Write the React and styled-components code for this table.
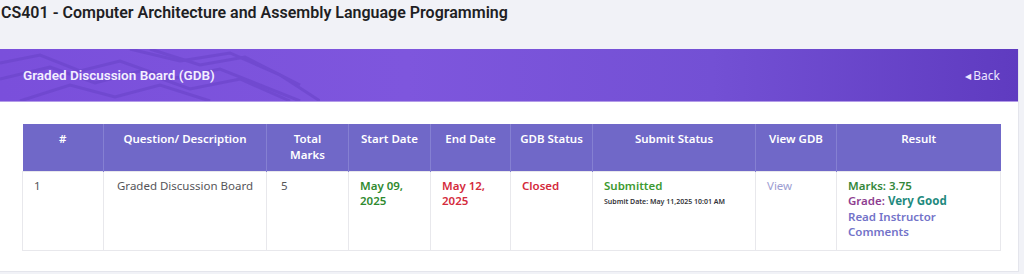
import React from 'react';
import styled, {createGlobalStyle} from 'styled-components';

const GlobalStyle = createGlobalStyle`
  body {
    margin: 0;
    background: #f1f2f7;
    font-family: "Noto Sans", "Open Sans", sans-serif;
  }
`;

const columns = [
    {title: '#', width: 81},
    {title: 'Question/ Description', width: 163},
    {title: 'Total Marks', width: 82, narrow: true},
    {title: 'Start Date', width: 82},
    {title: 'End Date', width: 80},
    {title: 'GDB Status', width: 82},
    {title: 'Submit Status', width: 163},
    {title: 'View GDB', width: 81},
    {title: 'Result', width: 164},
];

const Wave = () => (
    <WaveSvg viewBox="0 0 320 52" preserveAspectRatio="none">
        <path d="M0 14 L40 6 L80 22 L120 12 L170 30 L220 20 L300 52" />
        <path d="M0 30 L50 18 L95 34 L140 22 L190 40 L240 30 L290 52" />
        <path d="M20 52 L70 36 L115 48 L160 36 L210 52" />
        <path d="M130 0 L180 12 L230 4 L280 26 L320 52" />
        <path d="M150 0 L200 16 L245 8 L300 36" />
    </WaveSvg>
);

const App = () => {
    return (
        <Page>
            <GlobalStyle/>
            <Title>CS401 - Computer Architecture and Assembly Language Programming</Title>
            <Card>
                <Banner>
                    <Wave/>
                    <BannerTitle>Graded Discussion Board (GDB)</BannerTitle>
                    <BackLink><Caret>&#9664;</Caret>Back</BackLink>
                </Banner>
                <Body>
                    <Table>
                        <colgroup>
                            {columns.map(c => <col key={c.title} style={{width: c.width}}/>)}
                        </colgroup>
                        <thead>
                        <tr>
                            {columns.map(c => (
                                <Th key={c.title}>
                                    {c.narrow ? <NarrowLabel>{c.title}</NarrowLabel> : c.title}
                                </Th>
                            ))}
                        </tr>
                        </thead>
                        <tbody>
                        <tr>
                            <Td>1</Td>
                            <Td $pad={13}>Graded Discussion Board</Td>
                            <Td $pad={14}>5</Td>
                            <Td><Colored $color="#2f8a2f" $bold>May 09,<br/>2025</Colored></Td>
                            <Td><Colored $color="#d42a3c" $bold>May 12,<br/>2025</Colored></Td>
                            <Td><Colored $color="#d42a3c" $bold>Closed</Colored></Td>
                            <Td>
                                <Colored $color="#3d9a30" $bold>Submitted</Colored>
                                <SubmitDate>Submit Date: May 11,2025 10:01 AM</SubmitDate>
                            </Td>
                            <Td><Colored $color="#9d9dd2">View</Colored></Td>
                            <Td>
                                <ResultLine $color="#34873a">Marks: 3.75</ResultLine>
                                <ResultLine $color="#8e3d90">Grade: <Grade>Very Good</Grade></ResultLine>
                                <ResultLine $color="#7373c9">Read Instructor<br/>Comments</ResultLine>
                            </Td>
                        </tr>
                        </tbody>
                    </Table>
                </Body>
            </Card>
        </Page>
    );
};

const Page = styled.div`
  width: 1024px;
  height: 274px;
  overflow: hidden;
`;

const Title = styled.h1`
  margin: 0;
  padding: 3px 0 0 1px;
  height: 46px;
  box-sizing: border-box;
  font-family: Roboto, "Liberation Sans", sans-serif;
  font-size: 16px;
  font-weight: 600;
  color: #1f1f24;
`;

const Card = styled.div`
  width: 1019px;
  margin-top: 3px;
  background: #ffffff;
  border-right: 1px solid #e4e5ec;
  border-bottom: 1px solid #e4e5ec;
  box-sizing: border-box;
`;

const Banner = styled.div`
  position: relative;
  height: 52px;
  display: flex;
  align-items: center;
  justify-content: space-between;
  padding: 0 18px 0 23px;
  background: linear-gradient(90deg, #7a4fdb 0%, #7e56dd 40%, #7350d4 70%, #5f3bc0 100%);
  border-bottom: 1px solid #b39be8;
  overflow: hidden;
`;

const WaveSvg = styled.svg`
  position: absolute;
  left: 0;
  top: 0;
  width: 320px;
  height: 52px;
  fill: none;
  stroke: #6a44c9;
  stroke-width: 3;
  opacity: 0.6;
`;

const BannerTitle = styled.div`
  position: relative;
  font-family: Roboto, "Liberation Sans", sans-serif;
  font-size: 13.5px;
  font-weight: 600;
  color: #f3efff;
`;

const BackLink = styled.a`
  position: relative;
  font-size: 12px;
  color: #ece6ff;
  display: flex;
  align-items: center;
  gap: 2px;
`;

const Caret = styled.span`
  font-size: 8px;
`;

const Body = styled.div`
  padding: 22px 17px 20px 22px;
`;

const Table = styled.table`
  width: 978px;
  border-collapse: collapse;
  table-layout: fixed;
`;

const Th = styled.th`
  height: 47px;
  padding: 7px 6px 0;
  box-sizing: border-box;
  vertical-align: top;
  background: #7068c8;
  color: #ffffff;
  font-size: 11.5px;
  font-weight: 600;
  line-height: 16px;
  text-align: center;
  border-left: 1px solid #8580d2;
  &:first-child {
    border-left: none;
  }
`;

const NarrowLabel = styled.span`
  display: inline-block;
  width: 40px;
`;

const Td = styled.td`
  height: 79px;
  box-sizing: border-box;
  padding: 6px 8px 0 ${p => p.$pad || 11}px;
  vertical-align: top;
  border: 1px solid #e8e8ec;
  font-size: 11.5px;
  line-height: 15px;
  color: #555559;
`;

const Colored = styled.div`
  color: ${p => p.$color};
  font-weight: ${p => (p.$bold ? 600 : 400)};
`;

const SubmitDate = styled.div`
  margin-top: 1px;
  font-size: 7px;
  font-weight: 600;
  color: #333338;
`;

const ResultLine = styled.div`
  color: ${p => p.$color};
  font-weight: 600;
  line-height: 15.5px;
`;

const Grade = styled.span`
  color: #1f8a7e;
  font-weight: 700;
`;

export default App;
